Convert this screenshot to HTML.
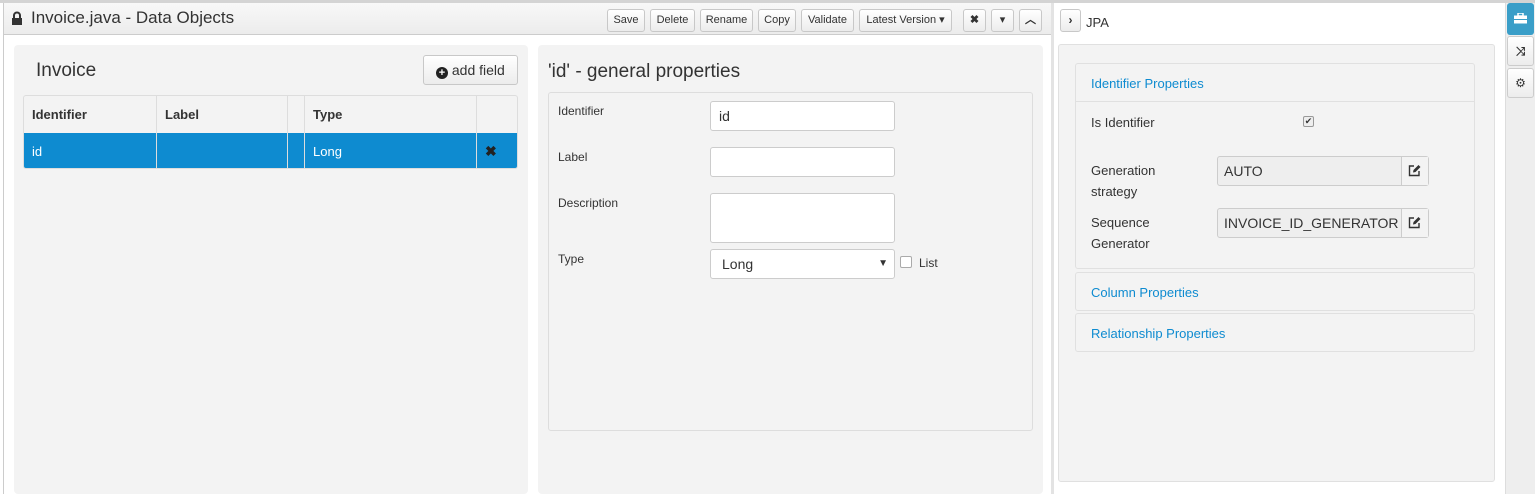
<!DOCTYPE html>
<html><head><style>
*{box-sizing:border-box;margin:0;padding:0}
body{width:1535px;height:494px;overflow:hidden;background:#fff;font-family:"Liberation Sans",Arial,sans-serif;font-size:13px;color:#333;position:relative}
.abs{position:absolute}
.btn{position:absolute;top:9px;height:23px;border:1px solid #c8c8c8;border-radius:3px;background:linear-gradient(#fff,#ececec);font-size:11px;line-height:21px;text-align:center;color:#333}
.lbl{position:absolute;font-size:12px;color:#333}
.inp{position:absolute;background:#fff;border:1px solid #ccc;border-radius:3px;font-size:14px;padding-left:8px}
.acc{position:absolute;left:1075px;width:400px;border:1px solid #e0e0e0;border-radius:3px;background:#f3f3f3}
.acc span{position:absolute;left:15px;color:#0e8bd0;font-size:13px}
</style></head><body>
<div class="abs" style="left:0;top:0;width:1535px;height:3px;background:#d4d4d4"></div>
<div class="abs" style="left:3px;top:3px;width:1048px;height:491px;background:#fff;border-left:1px solid #ccc"></div>
<div class="abs" style="left:4px;top:3px;width:1047px;height:32px;background:linear-gradient(#f8f8f8,#ececec);border-bottom:1px solid #ccc"></div>
<svg class="abs" style="left:11px;top:11px" width="12" height="15" viewBox="0 0 12 15"><path d="M3 7V4.5a3 3 0 0 1 6 0V7" fill="none" stroke="#333" stroke-width="2"/><rect x="1" y="7" width="10" height="7" fill="#333"/></svg>
<div class="abs" style="left:31px;top:8px;font-size:17px;color:#333">Invoice.java - Data Objects</div>
<div class="btn" style="left:607px;width:38px">Save</div>
<div class="btn" style="left:650px;width:45px">Delete</div>
<div class="btn" style="left:700px;width:53px">Rename</div>
<div class="btn" style="left:758px;width:38px">Copy</div>
<div class="btn" style="left:801px;width:53px">Validate</div>
<div class="btn" style="left:859px;width:93px">Latest Version ▾</div>
<div class="btn" style="left:963px;width:23px;font-weight:bold">✖</div>
<div class="btn" style="left:991px;width:23px">▾</div>
<div class="btn" style="left:1019px;width:23px;font-weight:bold">︿</div>
<div class="abs" style="left:14px;top:45px;width:514px;height:449px;background:#f3f3f3;border-radius:4px"></div>
<div class="abs" style="left:36px;top:60px;font-size:19px">Invoice</div>
<div class="abs" style="left:423px;top:55px;width:95px;height:30px;border:1px solid #c8c8c8;border-radius:3px;background:linear-gradient(#fff,#ececec);font-size:14px;line-height:28px;padding-left:12px"><span style="display:inline-block;width:12px;height:12px;border-radius:50%;background:#222;color:#fff;font-size:11px;line-height:12px;text-align:center;font-weight:bold;vertical-align:-1px">+</span> add field</div>
<div class="abs" style="left:23px;top:95px;width:495px;height:74px;border:1px solid #ddd;border-radius:3px;background:#f3f3f3;overflow:hidden">
 <div class="abs" style="left:0;top:37px;width:495px;height:37px;background:#0e8bd0"></div>
 <div class="abs" style="left:132px;top:0;width:1px;height:74px;background:#ddd"></div>
 <div class="abs" style="left:263px;top:0;width:1px;height:74px;background:#ddd"></div>
 <div class="abs" style="left:280px;top:0;width:1px;height:74px;background:#ddd"></div>
 <div class="abs" style="left:452px;top:0;width:1px;height:74px;background:#ddd"></div>
 <div class="abs" style="left:8px;top:11px;font-weight:bold">Identifier</div>
 <div class="abs" style="left:141px;top:11px;font-weight:bold">Label</div>
 <div class="abs" style="left:289px;top:11px;font-weight:bold">Type</div>
 <div class="abs" style="left:8px;top:48px;color:#fff">id</div>
 <div class="abs" style="left:289px;top:48px;color:#fff">Long</div>
 <div class="abs" style="left:461px;top:47px;color:#222;font-weight:bold;font-size:14px">✖</div>
</div>
<div class="abs" style="left:538px;top:45px;width:505px;height:449px;background:#f3f3f3;border-radius:4px"></div>
<div class="abs" style="left:548px;top:61px;font-size:19px">'id' - general properties</div>
<div class="abs" style="left:548px;top:92px;width:485px;height:339px;border:1px solid #ddd;border-radius:3px;background:#f3f3f3"></div>
<div class="lbl" style="left:558px;top:104px">Identifier</div>
<div class="inp" style="left:710px;top:101px;width:185px;height:30px;line-height:28px">id</div>
<div class="lbl" style="left:558px;top:150px">Label</div>
<div class="inp" style="left:710px;top:147px;width:185px;height:30px"></div>
<div class="lbl" style="left:558px;top:196px">Description</div>
<div class="inp" style="left:710px;top:193px;width:185px;height:50px"></div>
<div class="lbl" style="left:558px;top:252px">Type</div>
<div class="inp" style="left:710px;top:249px;width:185px;height:30px;line-height:28px;padding-left:11px">Long<span style="position:absolute;right:6px;font-size:10px">▼</span></div>
<div class="abs" style="left:900px;top:256px;width:12px;height:12px;border:1px solid #aaa;border-radius:2px;background:#fff"></div>
<div class="lbl" style="left:919px;top:256px">List</div>
<div class="abs" style="left:1051px;top:3px;width:3px;height:491px;background:#e3e3e3"></div>
<div class="abs" style="left:1060px;top:9px;width:21px;height:23px;border:1px solid #c8c8c8;border-radius:3px;background:linear-gradient(#fff,#ececec);font-weight:bold;text-align:center;line-height:21px;font-size:12px">›</div>
<div class="abs" style="left:1086px;top:15px;font-size:13px">JPA</div>
<div class="abs" style="left:1058px;top:44px;width:437px;height:438px;background:#f3f3f3;border:1px solid #e0e0e0;border-radius:3px"></div>
<div class="acc" style="top:63px;height:206px">
 <div class="abs" style="left:0;top:37px;width:398px;height:1px;background:#e0e0e0"></div>
 <span style="top:12px">Identifier Properties</span>
</div>
<div class="lbl" style="left:1091px;top:115px;font-size:13px">Is Identifier</div>
<div class="abs" style="left:1303px;top:116px;width:11px;height:11px;border:1px solid #999;border-radius:2px;background:#eee;font-size:9px;line-height:9px;text-align:center">✔</div>
<div class="lbl" style="left:1091px;top:160px;font-size:13px;line-height:21px">Generation<br>strategy</div>
<div class="inp" style="left:1217px;top:156px;width:212px;height:30px;line-height:28px;background:#eee;font-size:14px;padding-left:6px">AUTO</div>
<div class="abs" style="left:1401px;top:157px;width:27px;height:28px;border-left:1px solid #ccc;background:#f3f3f3"></div>
<svg class="abs" style="left:1408px;top:164px" width="13" height="13" viewBox="0 0 13 13"><path d="M6 2H1.5v9.5H11V7" fill="none" stroke="#333" stroke-width="1.4"/><path d="M5 8.5l0.5-2.5 5-5 2 2-5 5z" fill="#333"/></svg>
<div class="lbl" style="left:1091px;top:212px;font-size:13px;line-height:21px">Sequence<br>Generator</div>
<div class="inp" style="left:1217px;top:208px;width:212px;height:30px;line-height:28px;background:#eee;font-size:14px;padding-left:6px;overflow:hidden;white-space:nowrap"><div style="width:177px;overflow:hidden">INVOICE_ID_GENERATOR</div></div>
<div class="abs" style="left:1401px;top:209px;width:27px;height:28px;border-left:1px solid #ccc;background:#f3f3f3"></div>
<svg class="abs" style="left:1408px;top:216px" width="13" height="13" viewBox="0 0 13 13"><path d="M6 2H1.5v9.5H11V7" fill="none" stroke="#333" stroke-width="1.4"/><path d="M5 8.5l0.5-2.5 5-5 2 2-5 5z" fill="#333"/></svg>
<div class="acc" style="top:272px;height:39px"><span style="top:12px">Column Properties</span></div>
<div class="acc" style="top:313px;height:39px"><span style="top:12px">Relationship Properties</span></div>
<div class="abs" style="left:1505px;top:3px;width:30px;height:491px;background:#eee;border-left:1px solid #ddd"></div>
<div class="abs" style="left:1507px;top:3px;width:27px;height:32px;background:#3a9ec8;border-radius:3px"></div>
<svg class="abs" style="left:1514px;top:13px" width="13" height="11" viewBox="0 0 13 11"><rect x="4" y="0" width="5" height="3" fill="none" stroke="#fff" stroke-width="1.5"/><rect x="0" y="2.5" width="13" height="8" fill="#fff"/><rect x="0" y="6" width="13" height="1" fill="#3a9ec8"/></svg>
<div class="abs" style="left:1507px;top:36px;width:27px;height:30px;background:linear-gradient(#fff,#ececec);border:1px solid #ccc;border-radius:3px;text-align:center;line-height:28px;font-size:12px;font-weight:bold">⤨</div>
<div class="abs" style="left:1507px;top:68px;width:27px;height:30px;background:linear-gradient(#fff,#ececec);border:1px solid #ccc;border-radius:3px;text-align:center;line-height:28px;font-size:12px">⚙</div>
</body></html>
